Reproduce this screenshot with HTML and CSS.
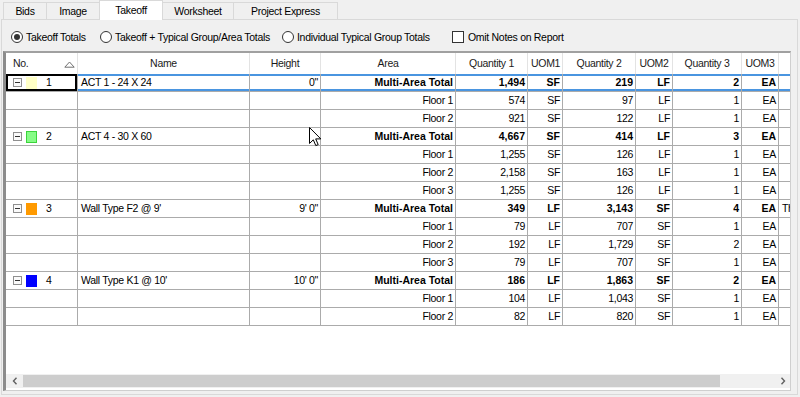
FILE: index.html
```html
<!DOCTYPE html>
<html>
<head>
<meta charset="utf-8">
<link rel="stylesheet" href="styles.css">
</head>
<body>
<div class="tabs">
  <div class="tab t-bids">Bids</div>
  <div class="tab t-image">Image</div>
  <div class="tab t-takeoff active">Takeoff</div>
  <div class="tab t-work">Worksheet</div>
  <div class="tab t-pe">Project Express</div>
</div>
<div class="panel">
  <div class="options">
    <div class="opt o1"><span class="radio on"></span>Takeoff Totals</div>
    <div class="opt o2"><span class="radio"></span>Takeoff + Typical Group/Area Totals</div>
    <div class="opt o3"><span class="radio"></span>Individual Typical Group Totals</div>
    <div class="opt o4"><span class="check"></span>Omit Notes on Report</div>
  </div>
  <div class="grid">
    <div class="rows">
      <div class="row head">
        <div class="c h no">No.<svg class="sort" width="11" height="7" viewBox="0 0 11 7"><path d="M0.8 6.2 L5.5 1 L10.2 6.2 Z" fill="none" stroke="#707070" stroke-width="1"/></svg></div>
        <div class="c h">Name</div>
        <div class="c h">Height</div>
        <div class="c h">Area</div>
        <div class="c h">Quantity 1</div>
        <div class="c h">UOM1</div>
        <div class="c h">Quantity 2</div>
        <div class="c h">UOM2</div>
        <div class="c h">Quantity 3</div>
        <div class="c h">UOM3</div>
        <div class="c h x"></div>
      </div>

      <div class="row grp focus">
        <div class="c no sel"><span class="minus"></span><span class="sw yellow"></span><span class="num">1</span></div>
        <div class="c l">ACT 1 - 24 X 24</div>
        <div class="c r">0"</div>
        <div class="c r v">Multi-Area Total</div>
        <div class="c r v">1,494</div>
        <div class="c r v">SF</div>
        <div class="c r v">219</div>
        <div class="c r v">LF</div>
        <div class="c r v">2</div>
        <div class="c r v">EA</div>
        <div class="c x"></div>
      </div>
      <div class="row">
        <div class="c no"></div><div class="c l"></div><div class="c r"></div>
        <div class="c r">Floor 1</div><div class="c r">574</div><div class="c r">SF</div>
        <div class="c r">97</div><div class="c r">LF</div><div class="c r">1</div><div class="c r">EA</div><div class="c x"></div>
      </div>
      <div class="row">
        <div class="c no"></div><div class="c l"></div><div class="c r"></div>
        <div class="c r">Floor 2</div><div class="c r">921</div><div class="c r">SF</div>
        <div class="c r">122</div><div class="c r">LF</div><div class="c r">1</div><div class="c r">EA</div><div class="c x"></div>
      </div>

      <div class="row grp">
        <div class="c no"><span class="minus"></span><span class="sw green"></span><span class="num">2</span></div>
        <div class="c l">ACT 4 - 30 X 60</div>
        <div class="c r"></div>
        <div class="c r v">Multi-Area Total</div>
        <div class="c r v">4,667</div>
        <div class="c r v">SF</div>
        <div class="c r v">414</div>
        <div class="c r v">LF</div>
        <div class="c r v">3</div>
        <div class="c r v">EA</div>
        <div class="c x"></div>
      </div>
      <div class="row">
        <div class="c no"></div><div class="c l"></div><div class="c r"></div>
        <div class="c r">Floor 1</div><div class="c r">1,255</div><div class="c r">SF</div>
        <div class="c r">126</div><div class="c r">LF</div><div class="c r">1</div><div class="c r">EA</div><div class="c x"></div>
      </div>
      <div class="row">
        <div class="c no"></div><div class="c l"></div><div class="c r"></div>
        <div class="c r">Floor 2</div><div class="c r">2,158</div><div class="c r">SF</div>
        <div class="c r">163</div><div class="c r">LF</div><div class="c r">1</div><div class="c r">EA</div><div class="c x"></div>
      </div>
      <div class="row">
        <div class="c no"></div><div class="c l"></div><div class="c r"></div>
        <div class="c r">Floor 3</div><div class="c r">1,255</div><div class="c r">SF</div>
        <div class="c r">126</div><div class="c r">LF</div><div class="c r">1</div><div class="c r">EA</div><div class="c x"></div>
      </div>

      <div class="row grp">
        <div class="c no"><span class="minus"></span><span class="sw orange"></span><span class="num">3</span></div>
        <div class="c l">Wall Type F2 @ 9'</div>
        <div class="c r">9' 0"</div>
        <div class="c r v">Multi-Area Total</div>
        <div class="c r v">349</div>
        <div class="c r v">LF</div>
        <div class="c r v">3,143</div>
        <div class="c r v">SF</div>
        <div class="c r v">4</div>
        <div class="c r v">EA</div>
        <div class="c x">Th</div>
      </div>
      <div class="row">
        <div class="c no"></div><div class="c l"></div><div class="c r"></div>
        <div class="c r">Floor 1</div><div class="c r">79</div><div class="c r">LF</div>
        <div class="c r">707</div><div class="c r">SF</div><div class="c r">1</div><div class="c r">EA</div><div class="c x"></div>
      </div>
      <div class="row">
        <div class="c no"></div><div class="c l"></div><div class="c r"></div>
        <div class="c r">Floor 2</div><div class="c r">192</div><div class="c r">LF</div>
        <div class="c r">1,729</div><div class="c r">SF</div><div class="c r">2</div><div class="c r">EA</div><div class="c x"></div>
      </div>
      <div class="row">
        <div class="c no"></div><div class="c l"></div><div class="c r"></div>
        <div class="c r">Floor 3</div><div class="c r">79</div><div class="c r">LF</div>
        <div class="c r">707</div><div class="c r">SF</div><div class="c r">1</div><div class="c r">EA</div><div class="c x"></div>
      </div>

      <div class="row grp">
        <div class="c no"><span class="minus"></span><span class="sw blue"></span><span class="num">4</span></div>
        <div class="c l">Wall Type K1 @ 10'</div>
        <div class="c r">10' 0"</div>
        <div class="c r v">Multi-Area Total</div>
        <div class="c r v">186</div>
        <div class="c r v">LF</div>
        <div class="c r v">1,863</div>
        <div class="c r v">SF</div>
        <div class="c r v">2</div>
        <div class="c r v">EA</div>
        <div class="c x"></div>
      </div>
      <div class="row">
        <div class="c no"></div><div class="c l"></div><div class="c r"></div>
        <div class="c r">Floor 1</div><div class="c r">104</div><div class="c r">LF</div>
        <div class="c r">1,043</div><div class="c r">SF</div><div class="c r">1</div><div class="c r">EA</div><div class="c x"></div>
      </div>
      <div class="row">
        <div class="c no"></div><div class="c l"></div><div class="c r"></div>
        <div class="c r">Floor 2</div><div class="c r">82</div><div class="c r">LF</div>
        <div class="c r">820</div><div class="c r">SF</div><div class="c r">1</div><div class="c r">EA</div><div class="c x"></div>
      </div>
    </div>
    <div class="hscroll">
      <div class="sbtn left"><svg width="6" height="8" viewBox="0 0 6 8"><path d="M4.5 0.8 L1.5 4 L4.5 7.2" fill="none" stroke="#606060" stroke-width="1.4"/></svg></div>
      <div class="thumb"></div>
      <div class="track"></div>
      <div class="sbtn right"><svg width="6" height="8" viewBox="0 0 6 8"><path d="M1.5 0.8 L4.5 4 L1.5 7.2" fill="none" stroke="#606060" stroke-width="1.4"/></svg></div>
    </div>
  </div>
</div>
<svg class="cursor" width="13" height="20" viewBox="0 0 13 20"><path d="M0.5 0.5 L0.5 16.5 L4.3 12.8 L6.8 18.6 L9.2 17.6 L6.7 11.9 L11.8 11.9 Z" fill="#fff" stroke="#000" stroke-width="1" stroke-linejoin="round"/></svg>
</body>
</html>
```
FILE: styles.css
```css
* { box-sizing: border-box; margin: 0; padding: 0; }
html, body { width: 800px; height: 397px; overflow: hidden; }
body {
  position: relative;
  background: #f0f0f0;
  font-family: "Liberation Sans", Arial, sans-serif;
  font-size: 10.5px;
  letter-spacing: -0.3px;
  color: #000;
}

/* tabs */
.tabs {
  display: flex;
  align-items: flex-end;
  height: 19px;
  padding-left: 3px;
  position: relative;
  z-index: 1;
}
.tab {
  height: 17px;
  line-height: 16px;
  border: 1px solid #d9d9d9;
  border-bottom: none;
  background: #f0f0f0;
  text-align: center;
  margin-right: -1px;
  color: #000;
}
.t-bids { width: 44px; }
.t-image { width: 54px; }
.t-takeoff { width: 64px; }
.t-work { width: 72px; }
.t-pe { width: 105px; }
.tab.active {
  height: 20px;
  line-height: 19px;
  margin-bottom: -1px;
  background: #fff;
  position: relative;
  z-index: 2;
}

/* panel */
.panel {
  margin-left: 1px;
  width: 797px;
  height: 376px;
  border: 1px solid #d9d9d9;
  background: #f0f0f0;
}
.options {
  display: flex;
  align-items: center;
  height: 31px;
  padding-top: 2px;
  padding-left: 9px;
}
.opt { display: flex; align-items: center; white-space: nowrap; }
.o1 { width: 89px; }
.o2 { width: 182px; }
.o3 { width: 170px; }
.radio {
  width: 12px;
  height: 12px;
  border: 1px solid #333;
  border-radius: 50%;
  background: #fff;
  margin-right: 3px;
  display: flex;
  align-items: center;
  justify-content: center;
  flex: none;
}
.radio.on::after {
  content: "";
  width: 6px;
  height: 6px;
  border-radius: 50%;
  background: #333;
}
.check {
  width: 12px;
  height: 12px;
  border: 1px solid #333;
  background: #fff;
  margin-right: 4px;
  flex: none;
}

/* grid */
.grid {
  margin-left: 1px;
  width: 788px;
  height: 340px;
  border-left: 3px solid #8c8c8c;
  border-top: 2px solid #a0a0a0;
  border-right: 1px solid #cfcfcf;
  border-bottom: 1px solid #cfcfcf;
  background: #fff;
  display: flex;
  flex-direction: column;
}
.rows { flex: 1; overflow: hidden; }
.row {
  display: grid;
  grid-template-columns: 72px 172px 71px 135px 72px 35px 73px 37px 69px 37px 1fr;
  height: 18px;
}
.row.head { height: 21px; }
.c {
  border-right: 1px solid #ababab;
  border-bottom: 1px solid #ababab;
  line-height: 17px;
  white-space: nowrap;
  overflow: hidden;
  padding: 0 3px;
}
.c.h {
  border-right: 1px solid #e3e3e3;
  border-bottom: none;
  line-height: 21px;
  text-align: center;
  color: #1a1a1a;
}
.c.h.no { position: relative; padding-right: 14px; }
.sort { position: absolute; right: 2px; top: 8px; }
.c.x { border-right: none; }
.c.h.x { border-right: none; }
.l { text-align: left; }
.r { text-align: right; padding-right: 2px; }
.grp .v { font-weight: bold; letter-spacing: 0; }

.c.no {
  display: flex;
  align-items: center;
  padding-left: 7px;
}
.minus {
  width: 9px;
  height: 9px;
  border: 1px solid #8f8f8f;
  background: #fafafa;
  position: relative;
  flex: none;
}
.minus::after {
  content: "";
  position: absolute;
  left: 1px;
  top: 3px;
  width: 5px;
  height: 1px;
  background: #333;
}
.sw {
  width: 11px;
  height: 12px;
  margin-left: 4px;
  flex: none;
}
.yellow { background: #ffffc6; }
.green { background: #86fc86; border: 1px solid #3cd43c; }
.orange { background: #ff9a00; }
.blue { background: #0000ff; }
.num { margin-left: 9px; }

.focus .c:not(.no) {
  box-shadow: inset 0 2px 0 #4a95e0, inset 0 -2px 0 #4a95e0;
}
.c.sel { box-shadow: inset 0 0 0 2px #000; }

/* scrollbar */
.hscroll {
  height: 14px;
  margin-bottom: 2px;
  background: #f0f0f0;
  display: flex;
  align-items: center;
  flex: none;
}
.sbtn {
  width: 17px;
  height: 14px;
  display: flex;
  align-items: center;
  justify-content: center;
}
.sbtn.right { width: 14px; }
.thumb { width: 697px; height: 12px; background: #cdcdcd; }
.track { flex: 1; }

.cursor { position: absolute; left: 309px; top: 127px; z-index: 5; }
```
